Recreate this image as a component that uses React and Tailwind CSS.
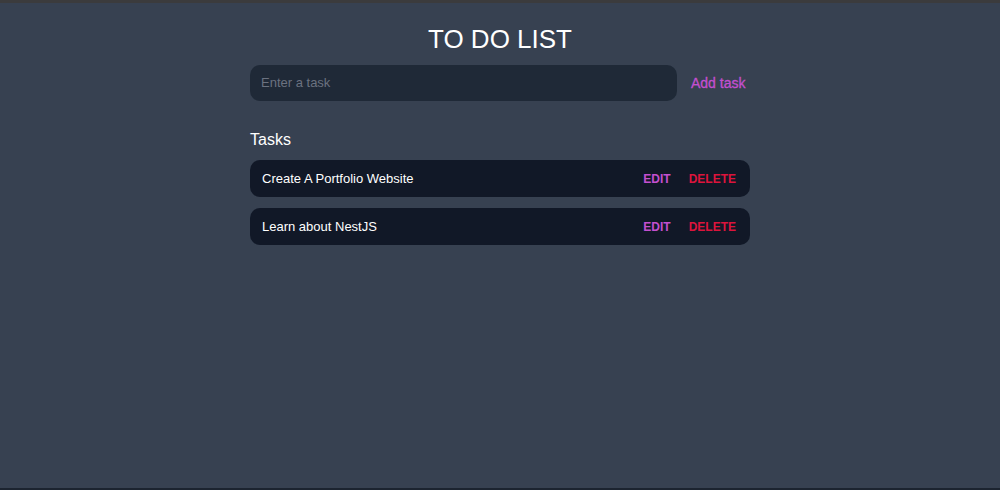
export default function App() {
  const tasks = ["Create A Portfolio Website", "Learn about NestJS"];
  return (
    <div className="w-[1000px] h-[490px] bg-[#374151] flex flex-col" style={{ fontFamily: '"Liberation Sans", Arial, sans-serif' }}>
      <div className="h-[3px] bg-[#3b3b3d] shrink-0" />
      <div className="flex-1 flex flex-col items-center">
        <h1 className="text-[26px] text-white leading-none mt-[23px]">TO DO LIST</h1>
        <div className="w-[500px] flex items-center mt-[13px]">
          <div className="w-[427px] h-[36px] rounded-[10px] bg-[#1f2937] flex items-center px-[11px]">
            <span className="text-[13px] text-[#6b7280]">Enter a task</span>
          </div>
          <span className="ml-[14px] text-[14px] font-medium text-[#c44fd0] [-webkit-text-stroke:0.3px_#c44fd0]">Add task</span>
        </div>
        <div className="w-[500px] mt-[31px]">
          <h2 className="text-[16px] text-white leading-none">Tasks</h2>
          <div className="flex flex-col gap-[11px] mt-[12px]">
            {tasks.map((t) => (
              <div key={t} className="h-[37px] rounded-[10px] bg-[#111827] flex items-center justify-between pl-[12px] pr-[14px]">
                <span className="text-[13px] text-white">{t}</span>
                <div className="flex items-center gap-[18px] text-[12px] font-bold">
                  <span className="text-[#c44fd0]">EDIT</span>
                  <span className="text-[#dc143c]">DELETE</span>
                </div>
              </div>
            ))}
          </div>
        </div>
      </div>
      <div className="h-[2px] bg-[#1c2430] shrink-0" />
    </div>
  );
}
